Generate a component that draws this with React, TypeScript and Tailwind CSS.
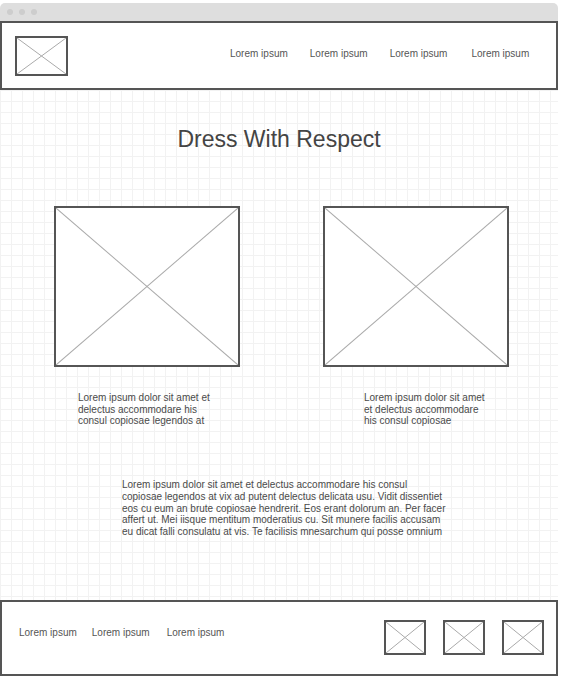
import React from "react";

// placeholder image box with a cross
function ImageBox({ className }: { className: string }) {
  return (
    <div className={`border-2 border-[#555] bg-white ${className}`}>
      <svg className="block w-full h-full" viewBox="0 0 100 100" preserveAspectRatio="none">
        <line x1="0" y1="0" x2="100" y2="100" stroke="#aaa" strokeWidth="1" vectorEffect="non-scaling-stroke" />
        <line x1="100" y1="0" x2="0" y2="100" stroke="#aaa" strokeWidth="1" vectorEffect="non-scaling-stroke" />
      </svg>
    </div>
  );
}

const navItems = ["Lorem ipsum", "Lorem ipsum", "Lorem ipsum", "Lorem ipsum"];

export default function App() {
  return (
    <div className="w-[561px] h-[676px] bg-white overflow-hidden font-['Liberation_Sans',Arial,sans-serif] text-[#444]">
      <div className="w-[558px]">
        {/* window bar */}
        <div className="mt-[3px] h-[18px] bg-[#dedede] rounded-t-[5px] flex items-center gap-[6px] pl-[7px]">
          <span className="w-[6px] h-[6px] rounded-full bg-[#cdcdcd]" />
          <span className="w-[6px] h-[6px] rounded-full bg-[#cdcdcd]" />
          <span className="w-[6px] h-[6px] rounded-full bg-[#cdcdcd]" />
        </div>

        {/* header */}
        <header className="h-[69px] border-2 border-[#555] bg-white flex items-center pl-[13px]">
          <ImageBox className="w-[53px] h-[40px]" />
          <nav className="flex ml-[162px] -mt-[4px] text-[10px] text-[#555]">
            {navItems.map((item, i) => (
              <span key={i} className={i === 0 ? "" : i === 3 ? "ml-[24px]" : "ml-[22px]"}>
                {item}
              </span>
            ))}
          </nav>
        </header>

        {/* main */}
        <main className="h-[510px] bg-[linear-gradient(to_right,#f2f2f2_1px,transparent_1px),linear-gradient(to_bottom,#f2f2f2_1px,transparent_1px)] bg-[size:11px_11px] pt-[36px]">
          <h1 className="text-center text-[23px] leading-[26px] text-[#444]">Dress With Respect</h1>

          <div className="flex mt-[54px] pl-[54px] gap-[83px]">
            <div>
              <ImageBox className="w-[186px] h-[161px]" />
              <p className="mt-[25px] pl-[24px] text-[10px] leading-[11.7px] text-[#4a4a4a]">
                Lorem ipsum dolor sit amet et
                <br />
                delectus accommodare his
                <br />
                consul copiosae legendos at
              </p>
            </div>
            <div>
              <ImageBox className="w-[186px] h-[161px]" />
              <p className="mt-[25px] pl-[41px] text-[10px] leading-[11.7px] text-[#4a4a4a]">
                Lorem ipsum dolor sit amet
                <br />
                et delectus accommodare
                <br />
                his consul copiosae
              </p>
            </div>
          </div>

          <p className="mt-[52px] pl-[122px] text-[10px] leading-[11.7px] text-[#4a4a4a]">
            Lorem ipsum dolor sit amet et delectus accommodare his consul
            <br />
            copiosae legendos at vix ad putent delectus delicata usu. Vidit dissentiet
            <br />
            eos cu eum an brute copiosae hendrerit. Eos erant dolorum an. Per facer
            <br />
            affert ut. Mei iisque mentitum moderatius cu. Sit munere facilis accusam
            <br />
            eu dicat falli consulatu at vis. Te facilisis mnesarchum qui posse omnium
          </p>
        </main>

        {/* footer */}
        <footer className="h-[76px] border-2 border-[#555] bg-white flex items-center pl-[17px] pr-[12px]">
          <div className="flex text-[10px] text-[#555] -mt-[11px]">
            <span>Lorem ipsum</span>
            <span className="ml-[15px]">Lorem ipsum</span>
            <span className="ml-[17px]">Lorem ipsum</span>
          </div>
          <div className="ml-auto flex gap-[17px] -mt-[2px]">
            <ImageBox className="w-[42px] h-[35px]" />
            <ImageBox className="w-[42px] h-[35px]" />
            <ImageBox className="w-[42px] h-[35px]" />
          </div>
        </footer>
      </div>
    </div>
  );
}
